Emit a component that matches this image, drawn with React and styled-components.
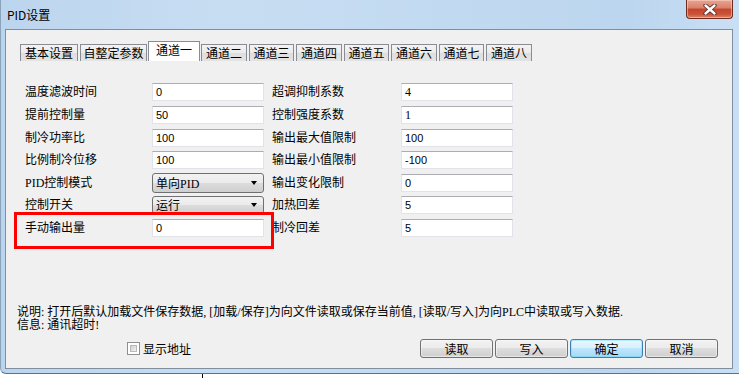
import React from "react";
import styled, { createGlobalStyle } from "styled-components";

const GlobalStyle = createGlobalStyle`
  html, body { margin: 0; padding: 0; background: #ffffff; }
  body {
    font-family: "Liberation Serif", "Noto Sans CJK SC", serif;
    font-size: 12px;
    color: #000;
  }
  #root { width: 739px; height: 378px; overflow: hidden; }
  * { box-sizing: border-box; }
`;

const Page = styled.div`
  width: 739px;
  height: 378px;
  display: flex;
  flex-direction: column;
  background: #fff;
  overflow: hidden;
`;

const Window = styled.div`
  height: 374px;
  width: 739px;
  display: flex;
  flex-direction: column;
  padding: 0 0 0 4px;
  border-left: 1px solid #8aa3bb;
  border-bottom: 1px solid #5f7184;
  border-bottom-left-radius: 6px;
  background: linear-gradient(90deg, #bcd5ee 0%, #c7ddf2 30%, #c2daf1 60%, #bcd6ef 85%, #c9dff4 100%);
`;

const TitleBar = styled.div`
  height: 29px;
  display: flex;
  align-items: flex-start;
`;

const Title = styled.div`
  font-family: "Noto Sans CJK SC", "Liberation Sans", sans-serif;
  font-size: 12px;
  line-height: 29px;
  padding-left: 2px;
  color: #000;
`;

const CloseButton = styled.div`
  margin-left: auto;
  margin-right: 6px;
  width: 47px;
  height: 19px;
  border: 1px solid #6d2b22;
  border-top: none;
  border-radius: 0 0 4px 4px;
  background: linear-gradient(180deg, #e8a593 0%, #d98069 45%, #c4442c 50%, #c9543b 80%, #e08466 100%);
  box-shadow: inset 0 0 0 1px rgba(255, 220, 210, 0.5);
  display: flex;
  align-items: center;
  justify-content: center;
`;

const Client = styled.div`
  position: relative;
  width: 728px;
  height: 340px;
  border: 1px solid #7f8fa0;
  background: #f0f0f0;
  display: flex;
  flex-direction: column;
  padding: 11px 14px 10px 11px;
`;

const TabStrip = styled.div`
  display: flex;
  align-items: flex-end;
  gap: 2px;
  height: 20px;
  margin-left: 3px;
`;

const Tab = styled.div`
  position: relative;
  width: ${(p) => p.$w}px;
  height: ${(p) => (p.$active ? 20 : 17)}px;
  margin: ${(p) => (p.$active ? "0 -1px" : "0")};
  border: 1px solid #898c95;
  border-bottom: none;
  background: ${(p) =>
    p.$active ? "#ffffff" : "linear-gradient(180deg, #f3f3f3 0%, #ebebeb 50%, #dedede 51%, #e3e3e3 100%)"};
  z-index: ${(p) => (p.$active ? 1 : 0)};
  font-family: "Noto Sans CJK SC", sans-serif;
  font-size: 12px;
  line-height: ${(p) => (p.$active ? 16 : 15)}px;
  text-align: center;
  white-space: nowrap;
`;

const FormGrid = styled.div`
  margin: 21px 0 0 8px;
  display: grid;
  grid-template-columns: 127px 112px 137px 112px;
  grid-template-rows: 19px 19px 19px 18px 19px 18px 19px;
  row-gap: 4px;
  align-items: center;
`;

const Label = styled.div`
  font-size: 12px;
  line-height: 14px;
  padding-left: ${(p) => (p.$right ? 8 : 0)}px;
  white-space: nowrap;
`;

const TextBox = styled.div`
  height: 18px;
  background: #fff;
  border: 1px solid #e2e3ea;
  border-top-color: #abadb3;
  padding-left: 3px;
  font-family: ${(p) => (p.$serif ? '"Liberation Serif", serif' : '"Liberation Sans", sans-serif')};
  font-size: ${(p) => (p.$serif ? 12 : 11)}px;
  line-height: 16px;
  white-space: nowrap;
`;

const Combo = styled.div`
  height: ${(p) => p.$h}px;
  border: 1px solid #707070;
  border-radius: 3px;
  background: linear-gradient(180deg, #f2f2f2 0%, #ebebeb 49%, #dddddd 50%, #cfcfcf 100%);
  display: flex;
  align-items: center;
  padding: 0 6px 0 3px;
  font-size: 12px;
`;

const ComboText = styled.span`
  flex: 1;
  white-space: nowrap;
`;

const Arrow = styled.span`
  width: 0;
  height: 0;
  border-left: 3.5px solid transparent;
  border-right: 3.5px solid transparent;
  border-top: 4px solid #000;
`;

const Spacer = styled.div`
  flex: 1;
`;

const Notes = styled.div`
  font-size: 12px;
  line-height: 13px;
  white-space: nowrap;
`;

const Footer = styled.div`
  margin-top: 7px;
  height: 19px;
  display: flex;
  align-items: center;
`;

const CheckWrap = styled.label`
  margin-left: 110px;
  display: flex;
  align-items: center;
  gap: 3px;
  font-size: 12px;
`;

const CheckBox = styled.span`
  width: 13px;
  height: 13px;
  border: 1px solid #8f8f8f;
  background: #fff;
  padding: 2px;
  display: inline-flex;
`;

const CheckInner = styled.span`
  flex: 1;
  background: linear-gradient(135deg, #cfcfcf 0%, #e4e4e4 60%, #f4f4f4 100%);
  border: 1px solid #b9b9b9;
`;

const Buttons = styled.div`
  margin-left: auto;
  display: flex;
  gap: 2px;
`;

const Button = styled.div`
  width: 73px;
  height: 19px;
  border: 1px solid ${(p) => (p.$default ? "#3c7fb1" : "#707070")};
  border-radius: 3px;
  background: ${(p) =>
    p.$default
      ? "linear-gradient(180deg, #eaf6fd 0%, #d9f0fc 49%, #bee6fd 50%, #a7d9f5 100%)"
      : "linear-gradient(180deg, #f2f2f2 0%, #ebebeb 49%, #dddddd 50%, #cfcfcf 100%)"};
  box-shadow: ${(p) => (p.$default ? "inset 0 0 0 1px #48d8fb55" : "inset 0 0 0 1px #fcfcfc88")};
  font-family: "Noto Sans CJK SC", sans-serif;
  font-size: 12px;
  line-height: 17px;
  text-align: center;
`;

const Highlight = styled.div`
  position: absolute;
  left: 8px;
  top: 182px;
  width: 260px;
  height: 37px;
  border: 3px solid #ff0000;
  pointer-events: none;
`;

const Below = styled.div`
  height: 4px;
  display: flex;
`;

const Tick = styled.div`
  margin-left: 202px;
  width: 1px;
  background: #000;
`;

const tabs = [
  { name: "基本设置", w: 58 },
  { name: "自整定参数", w: 67 },
  { name: "通道一", w: 52, active: true },
  { name: "通道二", w: 46 },
  { name: "通道三", w: 45 },
  { name: "通道四", w: 46 },
  { name: "通道五", w: 45 },
  { name: "通道六", w: 46 },
  { name: "通道七", w: 45 },
  { name: "通道八", w: 46 },
];

const rows = [
  { l: "温度滤波时间", v: "0", r: "超调抑制系数", rv: "4", rs: true },
  { l: "提前控制量", v: "50", r: "控制强度系数", rv: "1", rs: true },
  { l: "制冷功率比", v: "100", r: "输出最大值限制", rv: "100" },
  { l: "比例制冷位移", v: "100", r: "输出最小值限制", rv: "-100" },
  { l: "PID控制模式", combo: "单向PID", h: 20, r: "输出变化限制", rv: "0" },
  { l: "控制开关", combo: "运行", h: 18, r: "加热回差", rv: "5" },
  { l: "手动输出量", v: "0", r: "制冷回差", rv: "5" },
];

function CloseIcon() {
  return (
    <svg width="14" height="11" viewBox="0 0 14 11">
      <path d="M2.5 1.5 L11.5 9.5 M11.5 1.5 L2.5 9.5" stroke="#5a2a24" strokeWidth="4.2" strokeLinecap="round" />
      <path d="M2.5 1.5 L11.5 9.5 M11.5 1.5 L2.5 9.5" stroke="#ffffff" strokeWidth="2.4" strokeLinecap="round" />
    </svg>
  );
}

export default function App() {
  return (
    <>
      <GlobalStyle />
      <Page>
        <Window>
          <TitleBar>
            <Title>PID设置</Title>
            <CloseButton>
              <CloseIcon />
            </CloseButton>
          </TitleBar>
          <Client>
            <TabStrip>
              {tabs.map((t) => (
                <Tab key={t.name} $w={t.w} $active={t.active}>
                  {t.name}
                </Tab>
              ))}
            </TabStrip>
            <FormGrid>
              {rows.map((r) => (
                <React.Fragment key={r.l}>
                  <Label>{r.l}</Label>
                  {r.combo ? (
                    <Combo $h={r.h}>
                      <ComboText>{r.combo}</ComboText>
                      <Arrow />
                    </Combo>
                  ) : (
                    <TextBox>{r.v}</TextBox>
                  )}
                  <Label $right>{r.r}</Label>
                  <TextBox $serif={r.rs}>{r.rv}</TextBox>
                </React.Fragment>
              ))}
            </FormGrid>
            <Spacer />
            <Notes>
              <div>说明: 打开后默认加载文件保存数据, [加载/保存]为向文件读取或保存当前值, [读取/写入]为向PLC中读取或写入数据.</div>
              <div>信息: 通讯超时!</div>
            </Notes>
            <Footer>
              <CheckWrap>
                <CheckBox>
                  <CheckInner />
                </CheckBox>
                显示地址
              </CheckWrap>
              <Buttons>
                <Button>读取</Button>
                <Button>写入</Button>
                <Button $default>确定</Button>
                <Button>取消</Button>
              </Buttons>
            </Footer>
            <Highlight />
          </Client>
        </Window>
        <Below>
          <Tick />
        </Below>
      </Page>
    </>
  );
}
